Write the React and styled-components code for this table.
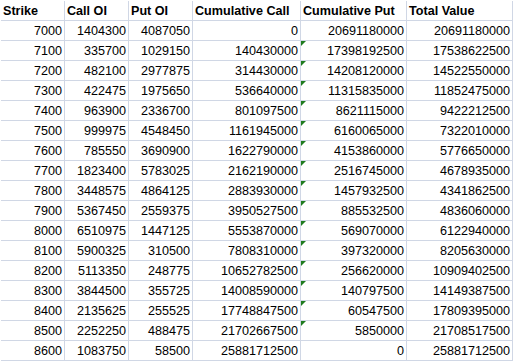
import React from 'react';
import styled, { createGlobalStyle } from 'styled-components';

const GlobalStyle = createGlobalStyle`
  html, body {
    margin: 0;
    padding: 0;
    background: #ffffff;
  }
  body {
    font-family: "Liberation Sans", Arial, sans-serif;
  }
`

const Folha = styled.div`
  width: 513px;
  height: 361px;
  overflow: hidden;
  padding: 1px 0 0 1px;
  box-sizing: border-box;
  background: #ffffff;
`

const Grade = styled.div`
  display: grid;
  grid-template-columns: 64px 64px 64px 108px 106px 106px;
  grid-auto-rows: 20px;
`

const Celula = styled.div`
  position: relative;
  box-sizing: border-box;
  border-right: 1px solid #d0d7e5;
  border-bottom: 1px solid #d0d7e5;
  display: flex;
  align-items: flex-end;
  justify-content: ${(p) => (p.$cabecalho ? 'flex-start' : 'flex-end')};
  padding: ${(p) => (p.$cabecalho ? '0 0 1px 2px' : '0 2px 1px 0')};
  font-size: 12.6px;
  line-height: 15px;
  font-weight: ${(p) => (p.$cabecalho ? 700 : 400)};
  color: #000000;
  white-space: nowrap;
  overflow: hidden;
`

const Triangulo = styled.span`
  position: absolute;
  top: 0;
  left: 0;
  width: 0;
  height: 0;
  border-top: 5px solid #1e7b1e;
  border-right: 5px solid transparent;
`

const cabecalhos = ['Strike', 'Call OI', 'Put OI', 'Cumulative Call', 'Cumulative Put', 'Total Value']

const linhas = [
  [7000, 1404300, 4087050, 0, 20691180000, 20691180000],
  [7100, 335700, 1029150, 140430000, 17398192500, 17538622500],
  [7200, 482100, 2977875, 314430000, 14208120000, 14522550000],
  [7300, 422475, 1975650, 536640000, 11315835000, 11852475000],
  [7400, 963900, 2336700, 801097500, 8621115000, 9422212500],
  [7500, 999975, 4548450, 1161945000, 6160065000, 7322010000],
  [7600, 785550, 3690900, 1622790000, 4153860000, 5776650000],
  [7700, 1823400, 5783025, 2162190000, 2516745000, 4678935000],
  [7800, 3448575, 4864125, 2883930000, 1457932500, 4341862500],
  [7900, 5367450, 2559375, 3950527500, 885532500, 4836060000],
  [8000, 6510975, 1447125, 5553870000, 569070000, 6122940000],
  [8100, 5900325, 310500, 7808310000, 397320000, 8205630000],
  [8200, 5113350, 248775, 10652782500, 256620000, 10909402500],
  [8300, 3844500, 355725, 14008590000, 140797500, 14149387500],
  [8400, 2135625, 255525, 17748847500, 60547500, 17809395000],
  [8500, 2252250, 488475, 21702667500, 5850000, 21708517500],
  [8600, 1083750, 58500, 25881712500, 0, 25881712500],
]

class App extends React.Component {
  render() {
    const ultima = linhas.length - 1

    return (
      <Folha>
        <GlobalStyle />
        <Grade>
          {cabecalhos.map((titulo) => (
            <Celula key={titulo} $cabecalho>{titulo}</Celula>
          ))}
          {linhas.map((linha, i) =>
            linha.map((valor, j) => (
              <Celula key={i + '-' + j}>
                {j === 4 && i > 0 && i < ultima && <Triangulo />}
                {valor}
              </Celula>
            ))
          )}
        </Grade>
      </Folha>
    );
  }
}

export default App;
